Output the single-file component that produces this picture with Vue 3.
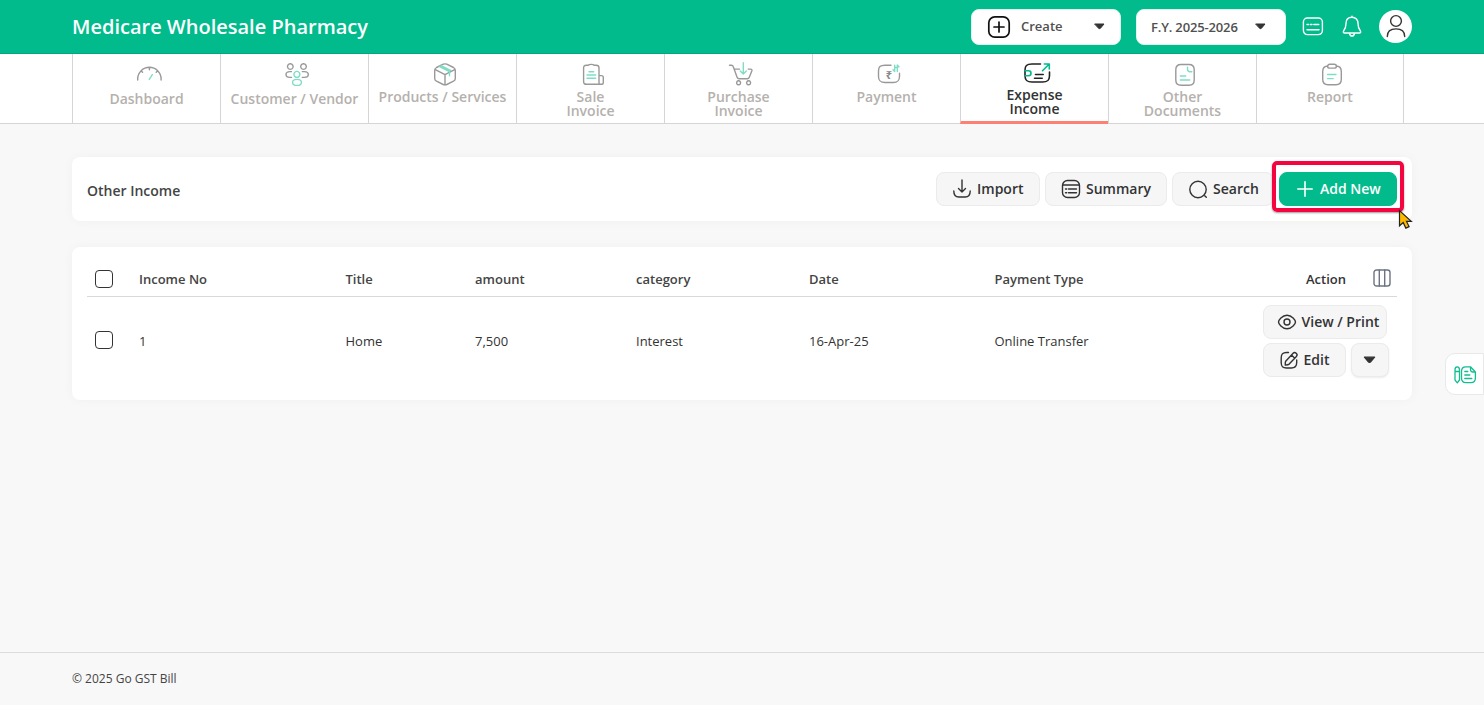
<template>
  <div class="page">
    <header class="topbar">
      <div class="brand">Medicare Wholesale Pharmacy</div>
      <div class="topbar-actions">
        <button class="select create">
          <svg width="24" height="24" viewBox="0 0 24 24">
            <rect x="1.8" y="1.8" width="20.4" height="20.4" rx="6" />
            <path d="M12 7v10M7 12h10" />
          </svg>
          <span>Create</span>
          <svg class="caret" width="11" height="7" viewBox="0 0 11 7">
            <path d="M1 1h9L6.500 5.200q-1 1-2 0z" />
          </svg>
        </button>
        <button class="select year">
          <span>F.Y. 2025-2026</span>
          <svg class="caret" width="11" height="7" viewBox="0 0 11 7">
            <path d="M1 1h9L6.500 5.200q-1 1-2 0z" />
          </svg>
        </button>
        <svg class="top-icon keys" width="22" height="20" viewBox="0 0 22 20">
          <rect x="1.4" y="1" width="19" height="16.6" rx="4" />
          <path d="M5 7.500h1.600M8.400 7.500H10M11.800 7.500h5M5 12.700h12" />
        </svg>
        <svg class="top-icon bell" width="20" height="24" viewBox="0 0 20 24">
          <path d="M10 2.300c-3.800 0-6 2.600-6 6.200 0 4-1 5.600-2.300 7.300-.8 1.200-.3 2.200 1 2.200h14.600c1.300 0 1.800-1 1-2.200C17 14.100 16 12.500 16 8.500c0-3.600-2.200-6.200-6-6.200zM10 2.300V1.200M7.500 18.500c.3 1.600 1.200 2.500 2.500 2.500s2.200-.9 2.500-2.500" />
        </svg>
        <div class="avatar">
          <svg width="33" height="33" viewBox="0 0 33 33">
            <circle cx="17" cy="11" r="5.4" />
            <path d="M8.300 26.500c0-4.800 3.300-7.600 8.700-7.600s8.700 2.800 8.700 7.600" />
          </svg>
        </div>
      </div>
    </header>

    <nav class="menu">
      <a
        v-for="item in menu"
        :key="item.name"
        class="menu-item"
        :class="[item.name, { active: item.name === current }]"
      >
        <svg width="28" height="26" viewBox="0 0 28 26">
          <path :d="item.icon" />
          <text v-if="item.name === 'payment'" x="13.800" y="17.300">₹</text>
          <path class="accent" :d="item.accent" />
        </svg>
        <span v-for="line in item.label" :key="line">{{ line }}</span>
      </a>
    </nav>

    <main>
      <section class="card toolbar">
        <h1>Other Income</h1>
        <div class="buttons">
          <button class="btn import">
            <svg width="20" height="20" viewBox="0 0 20 20">
              <path d="M10 1v12M6.500 9.600L10 13l3.500-3.400M1.800 12c0 4.300 1.300 6 5 6h6.400c3.700 0 5-1.700 5-6" />
            </svg>
            <span>Import</span>
          </button>
          <button class="btn summary">
            <svg width="20" height="20" viewBox="0 0 20 20">
              <rect x="1.500" y="1.500" width="17" height="17" rx="5" />
              <path d="M1.800 6h16.400M4.500 10h1.200M7.500 10h8M4.500 13.800h1.200M7.500 13.800h8" />
            </svg>
            <span>Summary</span>
          </button>
          <button class="btn search">
            <svg width="20" height="20" viewBox="0 0 20 20">
              <circle cx="10" cy="10.500" r="8.200" />
              <path d="M16.700 16.700l1.600 1.600" />
            </svg>
            <span>Search</span>
          </button>
          <div class="add-wrap">
            <button class="btn add">
              <svg width="16" height="16" viewBox="0 0 16 16">
                <path d="M8 .8v14.400M.8 8h14.400" />
              </svg>
              <span>Add New</span>
            </button>
            <span class="marker"></span>
            <svg class="pointer" width="16" height="21" viewBox="0 0 16 21">
              <path d="M1.500 1.500v15.300l3.700-3.300 2.600 5.600 3.300-1.500-2.600-5.200h4.800z" />
            </svg>
          </div>
        </div>
      </section>

      <section class="card list">
        <table>
          <colgroup>
            <col v-for="(w, i) in widths" :key="i" :style="{ width: w + 'px' }" />
          </colgroup>
          <thead>
            <tr>
              <th><input type="checkbox" v-model="allSelected" /></th>
              <th v-for="col in columns" :key="col.key">{{ col.title }}</th>
              <th>
                <div class="action-head">
                  <span>Action</span>
                  <svg width="18" height="18" viewBox="0 0 18 18">
                    <rect x="1" y="1" width="16" height="16" rx="2.500" />
                    <path d="M6.300 1v16M11.700 1v16" />
                  </svg>
                </div>
              </th>
            </tr>
          </thead>
          <tbody>
            <tr v-for="row in rows" :key="row.no">
              <td><input type="checkbox" v-model="row.selected" /></td>
              <td v-for="col in columns" :key="col.key">{{ row[col.key] }}</td>
              <td>
                <div class="row-actions">
                  <button class="btn view">
                    <svg width="20" height="20" viewBox="0 0 20 20">
                      <path d="M1.500 10c0-1.600 3.500-6.800 8.500-6.800s8.500 5.200 8.500 6.800-3.500 6.800-8.500 6.800S1.500 11.600 1.500 10z" />
                      <circle cx="10" cy="10" r="3" />
                    </svg>
                    <span>View / Print</span>
                  </button>
                  <button class="btn edit">
                    <svg width="20" height="20" viewBox="0 0 20 20">
                      <path d="M9.500 2.500H7.500c-4 0-5.300 1.500-5.300 5.500v4.500c0 4 1.300 5.500 5.300 5.500h4.800c4 0 5.400-1.500 5.400-5.500V10" />
                      <path d="M6.700 11.200l7.400-7.900c1.900-2 5.300 1 3.300 3.200l-7.200 7.600c-1 .8-2 .9-3.900 1-.1-1.700-.2-2.900.4-3.900zM12.500 5l3 3" />
                    </svg>
                    <span>Edit</span>
                  </button>
                  <button class="btn more">
                    <svg class="caret" width="13" height="8" viewBox="0 0 11 7">
                      <path d="M1 1h9L6.500 5.200q-1 1-2 0z" />
                    </svg>
                  </button>
                </div>
              </td>
            </tr>
          </tbody>
        </table>
      </section>
    </main>

    <div class="side-tab">
      <svg width="24" height="20" viewBox="0 0 24 20">
        <path d="M2 5c0-2.400.8-3.200 2.200-3.200S6.500 2.600 6.500 5v10L4.300 17.800 2 15zM2 6.500h4.500M13 1.800h4.500L22.400 7v6c0 3.500-1.300 4.700-4.500 4.700H13c-3.200 0-4.500-1.200-4.500-4.700V6.500c0-3.500 1.300-4.700 4.500-4.700zM17.500 2v2.500c0 1.800.8 2.500 2.500 2.500h2M11.800 6.500h3M11.800 10h5M11.800 13.500h7" />
      </svg>
    </div>

    <footer>© 2025 Go GST Bill</footer>
  </div>
</template>

<script setup>
import { ref, computed } from "vue";

const current = ref("expense");

const menu = [
  {
    name: "dashboard",
    label: ["Dashboard"],
    icon: "M2.700 18v-1a11.700 11.700 0 0 1 23.400 0v1M14.400 5.500v2.200M6.200 8.900l1.400 1.400M22.600 8.900l-1.400 1.400",
    accent: "M14.300 17.300l3-4.600",
  },
  {
    name: "customer",
    label: ["Customer / Vendor"],
    icon: "M7.300 1.800a2.800 2.800 0 1 0 .01 0M20.500 1.800a2.800 2.800 0 1 0 .01 0M8.500 9.600H7c-2.800 0-4 1.200-4 2.900s1.200 2.900 4 2.900h1.500M19.300 9.600h2c2.800 0 4 1.200 4 2.900s-1.200 2.900-4 2.900h-2",
    accent: "M13.900 9.400a3 3 0 1 0 .01 0M14 17.400c-2.600 0-4.400 1.200-4.400 3s1.800 3 4.400 3 4.400-1.200 4.400-3-1.800-3-4.400-3",
  },
  {
    name: "products",
    label: ["Products / Services"],
    icon: "M12.300 2.200c1.200-.5 2.200-.5 3.400 0l6.800 3.300c1.300.7 1.800 1.300 1.800 2.800v8.200c0 1.300-.5 2-1.800 2.700l-6.700 3.300c-1.300.6-2.300.6-3.600 0l-6.700-3.300c-1.300-.7-1.800-1.400-1.800-2.700V8.300c0-1.500.5-2.100 1.800-2.800zM4.300 7.600l9.700 5 9.700-5M14 12.600V23",
    accent: "M8.500 4.500l10 5v4.200M10 3.700l10 5",
  },
  {
    name: "sale",
    label: ["Sale", "Invoice"],
    icon: "M7.200 3.300h2c.8-1.300 5.200-1.300 6 0h2c1.800 0 2.800.8 2.800 2.700v15c0 1 .3 1.300 1.300 1.300H7.500c-2 0-2.900-.9-2.900-2.900V6c0-1.900.8-2.700 2.600-2.700zM20 13.600h2.500c1.300 0 1.800.6 1.800 1.800v5c0 1.300-.7 1.900-2 1.900h-2",
    accent: "M10 9.700h4.700M8 13h8.700M8 16.200h8.700",
  },
  {
    name: "purchase",
    label: ["Purchase", "Invoice"],
    icon: "M2.500 3.200h1.800c1.200 0 1.700.4 2 1.500L10 15c.4 1.200.9 1.700 2.200 1.700h8c1.200 0 1.800-.5 2.200-1.700l2.400-6c.4-1.200 0-1.900-1.300-1.900h-2.300M7.500 7.100h5M11.600 18.800a2 2 0 1 0 .01 0M21.600 18.800a2 2 0 1 0 .01 0",
    accent: "M16.300 .8v11M13.300 8.900l3 3 3-3",
  },
  {
    name: "payment",
    label: ["Payment"],
    icon: "M16 3.300H10c-5 0-6.500 1.500-6.500 6v5c0 4.500 1.500 6.200 6.500 6.200h8.300c4.700 0 6.200-1.700 6.200-6.200v-3",
    accent: "M19.700 9.500V3.200M18 7.800l1.700 1.700M22.300 3v6.500M24 4.700L22.300 3M20.700 5.500h2",
  },
  {
    name: "expense",
    label: ["Expense", "Income"],
    icon: "M17.500 2H9C3.500 2 2 4 2 8.200v5.600C2 18 3.500 20 9 20h10.500c5.500 0 7-2 7-6.200V10M12.500 12.500h7.700M11.500 16.200h7.700",
    accent: "M2 8.700h3.600c1.600 0 2.400.8 2.400 2.500s-.8 2.500-2.400 2.500H2M19.500 8.700L26.200 2M21.300 2h5v5",
  },
  {
    name: "documents",
    label: ["Other", "Documents"],
    icon: "M10 2.500h8c3.800 0 5.200 1.500 5.200 5.200V18c0 3.800-1.400 5.200-5.200 5.200h-8c-3.800 0-5.200-1.400-5.200-5.200V7.700c0-3.700 1.400-5.200 5.200-5.200z",
    accent: "M16.500 5.300v2c0 1.700.7 2.400 2.400 2.400h1.900M9.300 14h5.400M9.300 18h9.400",
  },
  {
    name: "report",
    label: ["Report"],
    icon: "M9 4C5 4 3.700 5.700 3.700 9.500v7.700C3.700 21 5 22.700 9 22.700h8c4 0 5.300-1.700 5.300-5.500V9.500C22.300 5.700 21 4 17 4M10.800 2.300h4.400c3 0 3 3.800 0 3.800h-4.400c-3 0-3-3.800 0-3.800z",
    accent: "M8.500 12.500H17M8.500 16.600h5.700",
  },
];

const widths = [52, 206.5, 129.5, 161, 173, 185.5, 268, 134.5];

const columns = [
  { key: "no", title: "Income No" },
  { key: "title", title: "Title" },
  { key: "amount", title: "amount" },
  { key: "category", title: "category" },
  { key: "date", title: "Date" },
  { key: "type", title: "Payment Type" },
];

const rows = ref([
  {
    no: 1,
    title: "Home",
    amount: "7,500",
    category: "Interest",
    date: "16-Apr-25",
    type: "Online Transfer",
    selected: false,
  },
]);

const allSelected = computed({
  get() {
    return rows.value.length > 0 && rows.value.every((row) => row.selected);
  },
  set(value) {
    rows.value.forEach((row) => {
      row.selected = value;
    });
  },
});
</script>

<style>
body {
  margin: 0;
  background: #f8f8f8;
}
</style>

<style scoped>
* {
  box-sizing: border-box;
}

.page {
  position: relative;
  display: flex;
  flex-direction: column;
  height: 705px;
  overflow: hidden;
  background: #f8f8f8;
  color: #333;
  font-family: "Open Sans", "Noto Sans", sans-serif;
  font-size: 13px;
}

svg {
  flex: none;
  fill: none;
  stroke: #333;
  stroke-width: 1.4;
  stroke-linecap: round;
  stroke-linejoin: round;
}

button {
  padding: 0;
  font-family: inherit;
}

.topbar {
  display: flex;
  justify-content: space-between;
  align-items: center;
  height: 54px;
  padding: 0 72px;
  background: #01bb8c;
  border-bottom: 1px solid #02a77d;
}

.brand {
  color: #fff;
  font-size: 20px;
  font-weight: 600;
}

.topbar-actions {
  display: flex;
  align-items: center;
}

.select {
  display: flex;
  align-items: center;
  width: 150px;
  height: 36px;
  margin-right: 15px;
  border: 1px solid #dff5ef;
  border-radius: 8px;
  background: #fff;
  color: #505050;
  font-size: 13px;
  font-weight: 600;
}

.create {
  padding: 0 15px;
}

.create svg:first-child {
  margin-right: 10px;
  stroke: #111;
  stroke-width: 1.7;
}

.create span {
  padding-bottom: 2px;
}

.year {
  padding: 0 19px 0 14px;
  letter-spacing: -0.15px;
}

.select .caret,
.more .caret {
  margin-left: auto;
  fill: #333;
  stroke-width: 1;
}

.top-icon {
  stroke: #fff;
}

.keys {
  margin-left: 1px;
}

.bell {
  margin: 0 17px 0 18px;
}

.avatar {
  width: 33px;
  height: 33px;
  border-radius: 50%;
  background: #fff;
}

.menu {
  display: flex;
  height: 70px;
  padding-left: 72px;
  background: #fff;
  border-bottom: 1px solid #d5d5d5;
}

.menu-item {
  display: flex;
  flex-direction: column;
  align-items: center;
  width: 148px;
  height: 69px;
  padding-top: 8px;
  border-left: 1px solid #d5d5d5;
  color: #b5b1ad;
  font-size: 14px;
  font-weight: 600;
  line-height: 14px;
  white-space: nowrap;
}

.menu-item svg {
  margin: 0 0 2px 5px;
  stroke: #999;
}

.menu-item svg text {
  fill: #888;
  stroke: none;
  font-size: 11px;
  font-weight: 700;
  text-anchor: middle;
}

.menu-item .accent {
  stroke: #80ddc5;
}

.dashboard svg,
.customer svg {
  margin-bottom: 4px;
}

.report {
  border-right: 1px solid #d5d5d5;
}

.menu-item.active {
  height: 70px;
  border-bottom: 3px solid #fd8075;
  color: #333;
}

.active svg {
  margin-bottom: 0;
  stroke: #222;
  stroke-width: 1.6;
}

.active .accent {
  stroke: #01bb8c;
}

main {
  flex: 1;
  padding: 33px 72px 0;
}

.card {
  border-radius: 8px;
  background: #fff;
  box-shadow: 0 0 12px rgba(0, 30, 20, 0.035);
}

.toolbar {
  display: flex;
  justify-content: space-between;
  height: 64px;
  padding: 15px;
}

h1 {
  margin: 9px 0 0;
  color: #444;
  font-size: 14px;
  font-weight: 600;
  line-height: 19px;
}

.buttons {
  display: flex;
  gap: 5px;
}

.btn {
  display: flex;
  align-items: center;
  height: 34px;
  border: 1px solid #ebebeb;
  border-radius: 8px;
  background: #f6f6f6;
  color: #333;
  font-size: 14px;
  font-weight: 600;
  white-space: nowrap;
}

.btn svg {
  margin-right: 5px;
}

.btn span {
  padding-bottom: 2px;
}

.import {
  width: 104px;
  padding-left: 15px;
}

.summary {
  width: 122px;
  padding-left: 15px;
}

.search {
  width: 102px;
  padding-left: 15px;
}

.add-wrap {
  position: relative;
}

.add {
  width: 118px;
  padding-left: 17px;
  border-color: #01bb8c;
  background: #01bb8c;
  color: #fff;
}

.add svg {
  margin-right: 7px;
  stroke: #fff;
  stroke-width: 1.6;
}

.marker {
  position: absolute;
  top: -11px;
  left: -7px;
  width: 132px;
  height: 51px;
  border: 4px solid #f4053f;
  border-radius: 5px;
  box-shadow: 0 1px 2px rgba(0, 0, 0, 0.4);
}

.pointer {
  position: absolute;
  top: 37px;
  left: 119px;
  fill: #fdb900;
  stroke: #222;
  stroke-width: 1.2;
  stroke-linejoin: miter;
}

.list {
  height: 153px;
  margin-top: 26px;
  padding: 15px;
}

table {
  width: 1310px;
  table-layout: fixed;
  border-collapse: collapse;
}

th {
  height: 34px;
  padding: 0;
  border-bottom: 1px solid #d9d9d9;
  color: #444;
  font-weight: 600;
  text-align: left;
}

td {
  height: 89px;
  padding: 0;
}

input[type="checkbox"] {
  display: block;
  width: 18px;
  height: 18px;
  margin: 0 0 0 8px;
  appearance: none;
  border: 1px solid #333;
  border-radius: 4px;
}

td input[type="checkbox"] {
  margin-bottom: 2px;
}

.action-head {
  display: flex;
  align-items: center;
}

.action-head span {
  width: 67px;
  margin-left: 43.5px;
  color: #333;
}

.action-head svg {
  margin-bottom: 2px;
  stroke: #6d7480;
}

.row-actions {
  display: flex;
  flex-wrap: wrap;
  gap: 4px 5px;
}

.row-actions span {
  padding-bottom: 1px;
}

.view {
  width: 124px;
  padding-left: 13px;
}

.edit {
  width: 83px;
  padding-left: 15px;
}

.more {
  width: 38px;
  justify-content: center;
  box-shadow: 0 1px 2px rgba(0, 0, 0, 0.08);
}

.more .caret {
  margin: 0;
}

.side-tab {
  position: absolute;
  top: 353px;
  right: 0;
  display: flex;
  align-items: center;
  width: 39px;
  height: 42px;
  padding-left: 7px;
  border: 1px solid #e9e9e9;
  border-radius: 10px 0 0 10px;
  background: #fff;
}

.side-tab svg {
  margin-top: 1px;
  stroke: #12bd91;
  stroke-width: 1.3;
}

footer {
  height: 53px;
  padding: 17px 72px 0;
  border-top: 1px solid #dcdcdc;
  color: #444;
  font-size: 12px;
  line-height: 17px;
}
</style>
